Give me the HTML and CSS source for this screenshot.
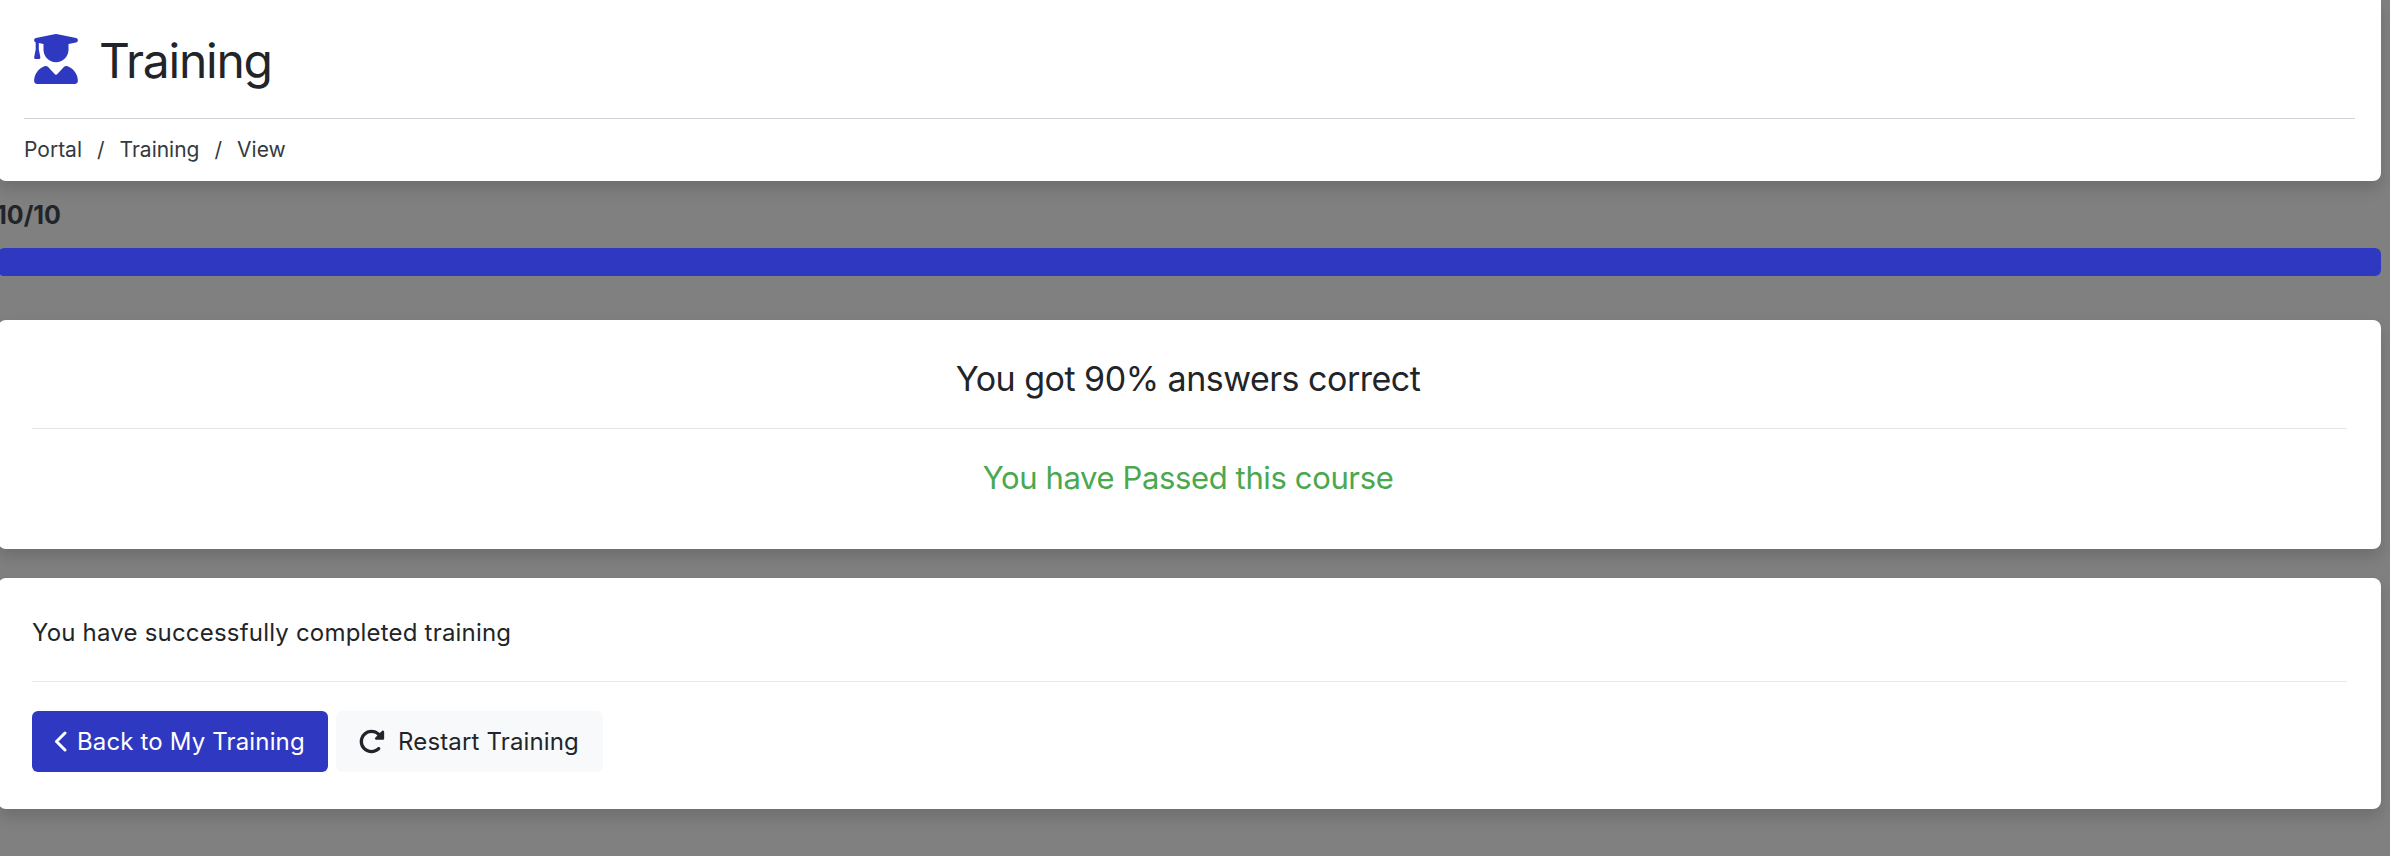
FILE: index.html
```html
<!DOCTYPE html>
<html lang="en">
<head>
    <meta charset="UTF-8">
    <title>Training</title>
    <link rel="stylesheet" href="styles.css">
</head>
<body>
    <div class="page">
        <div class="header-card">
            <div class="title-row">
                <svg class="title-icon" viewBox="0 0 448 512"><path d="M219.3.5c3.1-.6 6.3-.6 9.4 0l200 40C439.9 42.7 448 52.6 448 64s-8.1 21.3-19.3 23.5L352 102.9V160c0 70.7-57.3 128-128 128s-128-57.3-128-128V102.9L48 93.3v65.1l15.7 78.4c.9 4.7-.3 9.6-3.3 13.3s-7.6 5.900-12.400 5.900H16c-4.800 0-9.300-2.100-12.400-5.900s-4.300-8.600-3.300-13.300L16 158.400V86.600C6.500 83.300 0 74.300 0 64C0 52.600 8.100 42.700 19.300 40.500l200-40zM111.900 327.700c10.500-3.400 21.800 .4 29.400 8.500l71 75.500c6.300 6.700 17 6.700 23.300 0l71-75.500c7.600-8.100 18.900-11.900 29.400-8.500C401 348.600 448 409.400 448 481.300c0 17-13.800 30.700-30.700 30.700H30.700C13.800 512 0 498.200 0 481.300c0-71.900 47-132.700 111.900-153.600z"/></svg>
                <h1>Training</h1>
            </div>
            <div class="breadcrumb">
                <span>Portal</span>
                <span class="sep">/</span>
                <span>Training</span>
                <span class="sep">/</span>
                <span>View</span>
            </div>
        </div>

        <div class="progress-label">10/10</div>
        <div class="progress-bar"></div>

        <div class="card result-card">
            <div class="score">You got 90% answers correct</div>
            <div class="passed">You have Passed this course</div>
        </div>

        <div class="card done-card">
            <div class="done-text">You have successfully completed training</div>
            <div class="actions">
                <a class="button button-primary">
                    <svg class="chevron" viewBox="0 0 13 21"><path d="M11 2L2.500 10.500L11 19"/></svg>
                    Back to My Training
                </a>
                <a class="button button-light">
                    <svg class="redo" viewBox="0 0 512 512"><path d="M463.500 224H472c13.300 0 24-10.700 24-24V72c0-9.700-5.800-18.500-14.800-22.200s-19.300-1.700-26.200 5.200L413.400 96.600c-87.600-86.500-228.700-86.200-315.800 1c-87.500 87.500-87.500 229.300 0 316.800s229.300 87.500 316.800 0c12.500-12.500 12.500-32.800 0-45.300s-32.800-12.500-45.300 0c-62.500 62.500-163.800 62.500-226.300 0s-62.500-163.800 0-226.300c62.200-62.200 162.700-62.500 225.300-1L327 183c-6.900 6.900-8.900 17.200-5.200 26.200s12.500 14.800 22.200 14.800H463.500z"/></svg>
                    Restart Training
                </a>
            </div>
        </div>
    </div>
</body>
</html>
```

FILE: styles.css
```css
* {
    margin: 0;
    padding: 0;
    box-sizing: border-box;
}

html, body {
    height: 856px;
    overflow: hidden;
}

body {
    font-family: Inter, 'Noto Sans', sans-serif;
    background: #808080;
    color: #212529;
}

.page {
    width: 2383px;
    margin-left: -2px;
}

.header-card, .card {
    background: white;
    border-radius: 8px;
    box-shadow: 0 8px 16px rgba(0, 0, 0, 0.15);
}

.header-card {
    height: 181px;
    padding: 0 26px;
    border-radius: 0 0 8px 8px;
}

.title-row {
    height: 119px;
    border-bottom: 1px solid #ced4da;
    display: flex;
    align-items: center;
    gap: 21px;
    padding: 0 0 0 10px;
}

.title-icon {
    width: 44px;
    height: 50px;
    fill: #2f38c0;
}

h1 {
    font-size: 48px;
    font-weight: 400;
    line-height: 58px;
    letter-spacing: -1.25px;
    padding-top: 3px;
}

.breadcrumb {
    display: flex;
    gap: 15px;
    padding-top: 18px;
    font-size: 21px;
    line-height: 25px;
    color: #343a40;
}

.progress-label {
    margin-top: 19px;
    margin-left: -2px;
    font-size: 25px;
    font-weight: 700;
    line-height: 30px;
    height: 48px;
    color: #212529;
}

.progress-bar {
    height: 28px;
    background: #2f38c0;
    border-radius: 6px;
}

.result-card {
    margin-top: 44px;
    height: 229px;
    padding: 0 34px;
    text-align: center;
}

.score {
    height: 109px;
    border-bottom: 1px solid #e5e5e5;
    padding-right: 3px;
    font-size: 34px;
    line-height: 118px;
    letter-spacing: -0.5px;
}

.passed {
    padding: 29px 3px 0 0;
    font-size: 31px;
    line-height: 40px;
    letter-spacing: -0.37px;
    color: #4aa84f;
}

.done-card {
    margin-top: 29px;
    height: 231px;
    padding: 0 34px;
}

.done-text {
    height: 104px;
    border-bottom: 1px solid #e9e9e9;
    font-size: 24px;
    line-height: 110px;
    letter-spacing: 0.2px;
}

.actions {
    display: flex;
    gap: 8px;
    padding-top: 29px;
}

.button {
    display: flex;
    align-items: center;
    height: 61px;
    border-radius: 6px;
    font-size: 24px;
    letter-spacing: 0.15px;
}

.button-primary {
    width: 296px;
    padding-left: 22px;
    gap: 10px;
    background: #2f38c0;
    color: white;
}

.button-light {
    width: 267px;
    padding-left: 22px;
    gap: 13px;
    background: #f8f9fa;
    color: #212529;
}

.chevron {
    width: 13px;
    height: 21px;
    fill: none;
    stroke: white;
    stroke-width: 3;
    stroke-linecap: round;
    stroke-linejoin: round;
}

.redo {
    width: 27px;
    height: 27px;
    fill: #212529;
}
```
